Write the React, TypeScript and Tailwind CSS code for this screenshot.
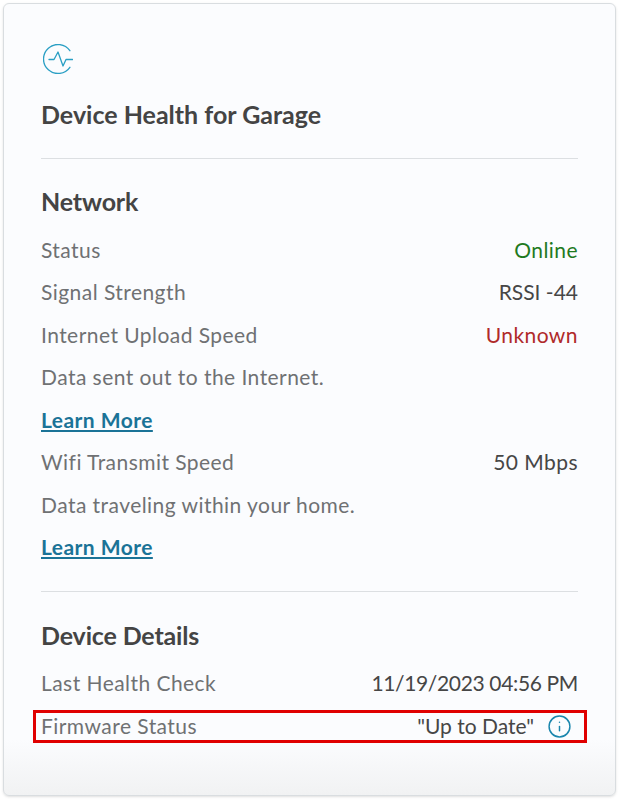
import { Info } from 'lucide-react'

const FONT = { fontFamily: 'Lato, sans-serif' }

function Row({ label, value, valueClass = 'text-[#464646]' }: { label: string; value: string; valueClass?: string }) {
  return (
    <div className="flex h-[42.5px] items-center justify-between">
      <span className="text-[#6f7173]">{label}</span>
      <span className={valueClass}>{value}</span>
    </div>
  )
}

function Note({ text }: { text: string }) {
  return (
    <div className="flex h-[42.5px] items-center text-[#6f7173]">{text}</div>
  )
}

function LearnMore() {
  return (
    <div className="flex h-[42.5px] items-center">
      <a className="font-bold text-[#1a7397] underline">Learn More</a>
    </div>
  )
}

export default function App() {
  return (
    <div className="h-[800px] w-[619px] bg-white p-[3px] pb-[4px]" style={FONT}>
      <div className="flex h-full flex-col rounded-[6px] border border-[#d9dde0] bg-[linear-gradient(#fbfcfe_0%,#fbfcfe_93%,#f1f2f3_100%)] px-[37px] text-[21px] tracking-[0.45px] shadow-sm">
        <svg className="ml-[2px] mt-[40px] h-[30px] w-[30px] text-[#2a9fc4]" viewBox="0 0 30 30" fill="none" stroke="currentColor" strokeWidth="1.3" strokeLinecap="round" strokeLinejoin="round">
          <path d="M26.9 6.7A14.5 14.5 0 1 0 26.9 23.3" />
          <path d="M6 15.5h5l4-7.5 5 14 3-6.5h6.5" />
        </svg>
        <h1 className="mt-[24px] text-[25px] font-bold leading-[32px] tracking-normal text-[#444444]">Device Health for Garage</h1>
        <div className="mt-[28px] border-t border-[#dcdfe2]" />
        <h2 className="mt-[26px] text-[25px] font-bold leading-[32px] tracking-[-0.15px] text-[#444444]">Network</h2>
        <div className="mt-[11px]">
          <Row label="Status" value="Online" valueClass="text-[#1f7a1f]" />
          <Row label="Signal Strength" value="RSSI -44" valueClass="tracking-normal text-[#464646]" />
          <Row label="Internet Upload Speed" value="Unknown" valueClass="text-[#b02a2a]" />
          <Note text="Data sent out to the Internet." />
          <LearnMore />
          <Row label="Wifi Transmit Speed" value="50 Mbps" />
          <Note text="Data traveling within your home." />
          <LearnMore />
        </div>
        <div className="mt-[23px] border-t border-[#dcdfe2]" />
        <h2 className="mt-[27px] text-[25px] font-bold leading-[32px] tracking-[-0.15px] text-[#444444]">Device Details</h2>
        <div className="mt-[10px]">
          <Row label="Last Health Check" value="11/19/2023 04:56 PM" valueClass="tracking-[-0.35px] text-[#464646]" />
          <div className="-ml-[8px] -mr-[9px] mt-[6px] flex h-[33px] items-center justify-between border-[3px] border-[#e00000] pl-[5px] pr-[12px]">
            <span className="text-[#6f7173]">Firmware Status</span>
            <span className="flex items-center gap-[13px] tracking-normal text-[#464646]">
              "Up to Date"
              <Info className="h-[25px] w-[25px] text-[#1a86ad]" strokeWidth={1.4} />
            </span>
          </div>
        </div>
      </div>
    </div>
  )
}
